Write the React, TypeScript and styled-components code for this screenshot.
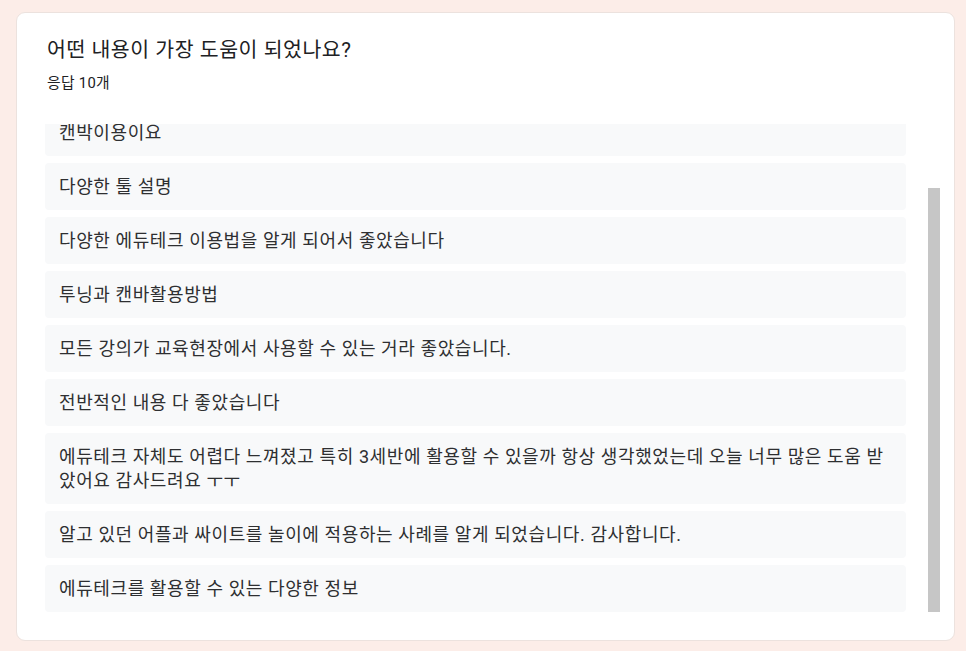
import React, { useLayoutEffect, useRef } from "react";
import styled, { createGlobalStyle } from "styled-components";

const Global = createGlobalStyle`
  html, body { margin: 0; padding: 0; background: #fcede8; }
  body { font-family: Roboto, "Noto Sans CJK KR", "Noto Sans", sans-serif; color: #202124; }
  * { box-sizing: border-box; }
`;

const Page = styled.div`
  height: 651px;
  padding: 12px 11px 10px 16px;
  display: flex;
`;

const Card = styled.section`
  flex: 1;
  background: #ffffff;
  border: 1px solid #ece2de;
  border-radius: 9px;
  padding: 24px 14px 28px 28px;
  display: flex;
  flex-direction: column;
`;

const Header = styled.header`
  padding-left: 2px;
  display: flex;
  flex-direction: column;
  gap: 8px;
`;

const Title = styled.h2`
  margin: 0;
  font-size: 20.5px;
  letter-spacing: 0.55px;
  line-height: 27px;
  font-weight: 400;
  color: #202124;
`;

const Count = styled.div`
  font-size: 14.8px;
  letter-spacing: 0.3px;
  line-height: 22px;
  color: #202124;
`;

const ListArea = styled.div`
  margin-top: 30px;
  height: 488px;
  display: flex;
  gap: 22px;
`;

const Viewport = styled.div`
  flex: 1;
  min-width: 0;
  overflow: hidden;
  display: flex;
  flex-direction: column;
  gap: 7px;
`;

const Track = styled.div`
  flex: none;
  width: 12px;
  display: flex;
  flex-direction: column;
  padding-top: 64px;
`;

const Thumb = styled.div`
  flex: 1;
  background: #c6c6c6;
`;

const Item = styled.div`
  flex: none;
  background: #f8f9fa;
  border-radius: 4px;
  padding: 11.5px 14px;
  font-size: 18px;
  letter-spacing: 0.6px;
  line-height: 24px;
  color: #2e2f31;
`;

const answers = [
  "패들렛 활용 방법",
  "캔박이용이요",
  "다양한 툴 설명",
  "다양한 에듀테크 이용법을 알게 되어서 좋았습니다",
  "투닝과 캔바활용방법",
  "모든 강의가 교육현장에서 사용할 수 있는 거라 좋았습니다.",
  "전반적인 내용 다 좋았습니다",
  "에듀테크 자체도 어렵다 느껴졌고 특히 3세반에 활용할 수 있을까 항상 생각했었는데 오늘 너무 많은 도움 받았어요 감사드려요 ㅜㅜ",
  "알고 있던 어플과 싸이트를 놀이에 적용하는 사례를 알게 되었습니다. 감사합니다.",
  "에듀테크를 활용할 수 있는 다양한 정보",
];

export default function App() {
  const listRef = useRef<HTMLDivElement>(null);
  useLayoutEffect(() => {
    const el = listRef.current;
    if (el) el.scrollTop = el.scrollHeight;
  }, []);
  return (
    <>
      <Global />
      <Page>
        <Card>
          <Header>
            <Title>어떤 내용이 가장 도움이 되었나요?</Title>
            <Count>응답 10개</Count>
          </Header>
          <ListArea>
            <Viewport ref={listRef}>
              {answers.map((a, i) => (
                <Item key={i}>{a}</Item>
              ))}
            </Viewport>
            <Track>
              <Thumb />
            </Track>
          </ListArea>
        </Card>
      </Page>
    </>
  );
}
